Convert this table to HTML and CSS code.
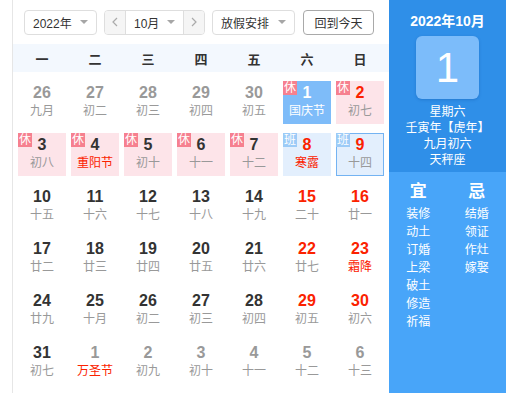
FILE: index.html
```html
<!DOCTYPE html>
<html lang="zh">
<head>
<meta charset="utf-8">
<title>万年历</title>
<link rel="stylesheet" href="styles.css">
</head>
<body>
<div class="cal">
  <div class="main">
    <div class="toolbar">
      <div class="select year"><span>2022年</span><i class="caret"></i></div>
      <div class="month-group">
        <div class="nav"><svg width="6" height="10" viewBox="0 0 6 10"><polyline points="5,1 1,5 5,9" fill="none" stroke="#aaa" stroke-width="1.2"/></svg></div>
        <div class="month"><span>10月</span><i class="caret"></i></div>
        <div class="nav"><svg width="6" height="10" viewBox="0 0 6 10"><polyline points="1,1 5,5 1,9" fill="none" stroke="#aaa" stroke-width="1.2"/></svg></div>
      </div>
      <div class="select holiday"><span>放假安排</span><i class="caret"></i></div>
      <button class="today-btn">回到今天</button>
    </div>
    <div class="week">
      <span>一</span><span>二</span><span>三</span><span>四</span><span>五</span><span>六</span><span>日</span>
    </div>
    <div class="grid">
      <div class="cell other"><b>26</b><em>九月</em></div>
      <div class="cell other"><b>27</b><em>初二</em></div>
      <div class="cell other"><b>28</b><em>初三</em></div>
      <div class="cell other"><b>29</b><em>初四</em></div>
      <div class="cell other"><b>30</b><em>初五</em></div>
      <div class="cell rest selected"><i class="tag">休</i><b>1</b><em>国庆节</em></div>
      <div class="cell rest wkend"><i class="tag">休</i><b>2</b><em>初七</em></div>

      <div class="cell rest"><i class="tag">休</i><b>3</b><em>初八</em></div>
      <div class="cell rest"><i class="tag">休</i><b>4</b><em class="fest">重阳节</em></div>
      <div class="cell rest"><i class="tag">休</i><b>5</b><em>初十</em></div>
      <div class="cell rest"><i class="tag">休</i><b>6</b><em>十一</em></div>
      <div class="cell rest"><i class="tag">休</i><b>7</b><em>十二</em></div>
      <div class="cell work wkend"><i class="tag">班</i><b>8</b><em class="fest">寒露</em></div>
      <div class="cell work wkend today"><i class="tag">班</i><b>9</b><em>十四</em></div>

      <div class="cell"><b>10</b><em>十五</em></div>
      <div class="cell"><b>11</b><em>十六</em></div>
      <div class="cell"><b>12</b><em>十七</em></div>
      <div class="cell"><b>13</b><em>十八</em></div>
      <div class="cell"><b>14</b><em>十九</em></div>
      <div class="cell wkend"><b>15</b><em>二十</em></div>
      <div class="cell wkend"><b>16</b><em>廿一</em></div>

      <div class="cell"><b>17</b><em>廿二</em></div>
      <div class="cell"><b>18</b><em>廿三</em></div>
      <div class="cell"><b>19</b><em>廿四</em></div>
      <div class="cell"><b>20</b><em>廿五</em></div>
      <div class="cell"><b>21</b><em>廿六</em></div>
      <div class="cell wkend"><b>22</b><em>廿七</em></div>
      <div class="cell wkend"><b>23</b><em class="fest">霜降</em></div>

      <div class="cell"><b>24</b><em>廿九</em></div>
      <div class="cell"><b>25</b><em>十月</em></div>
      <div class="cell"><b>26</b><em>初二</em></div>
      <div class="cell"><b>27</b><em>初三</em></div>
      <div class="cell"><b>28</b><em>初四</em></div>
      <div class="cell wkend"><b>29</b><em>初五</em></div>
      <div class="cell wkend"><b>30</b><em>初六</em></div>

      <div class="cell"><b>31</b><em>初七</em></div>
      <div class="cell other"><b>1</b><em class="fest">万圣节</em></div>
      <div class="cell other"><b>2</b><em>初九</em></div>
      <div class="cell other"><b>3</b><em>初十</em></div>
      <div class="cell other"><b>4</b><em>十一</em></div>
      <div class="cell other"><b>5</b><em>十二</em></div>
      <div class="cell other"><b>6</b><em>十三</em></div>
    </div>
  </div>
  <div class="side">
    <div class="side-top">
      <div class="side-title">2022年10月</div>
      <div class="big-day">1</div>
      <div class="side-info">
        <div>星期六</div>
        <div>壬寅年【虎年】</div>
        <div>九月初六</div>
        <div>天秤座</div>
      </div>
    </div>
    <div class="side-bot">
      <div class="yj">
        <div class="yj-head">宜</div>
        <div>装修</div><div>动土</div><div>订婚</div><div>上梁</div><div>破土</div><div>修造</div><div>祈福</div>
      </div>
      <div class="yj">
        <div class="yj-head">忌</div>
        <div>结婚</div><div>领证</div><div>作灶</div><div>嫁娶</div>
      </div>
    </div>
  </div>
</div>
</body>
</html>
```
FILE: styles.css
```css
* { box-sizing: border-box; }
body {
  margin: 0;
  background: #fff;
  font-family: "Liberation Sans", "Noto Sans CJK SC", sans-serif;
  color: #333;
}
.cal {
  display: flex;
  margin-left: 12px;
  width: 494px;
  height: 393px;
}
.main {
  width: 377px;
  border-left: 1px solid #e6e6e6;
}
.toolbar {
  display: flex;
  align-items: center;
  height: 44px;
  padding: 10px 0 10px 11px;
}
.select {
  display: flex;
  align-items: center;
  justify-content: space-between;
  height: 25px;
  border: 1px solid #dedede;
  border-radius: 4px;
  font-size: 12px;
  padding: 0 8px 0 8px;
  margin-right: 7px;
}
.year { width: 73px; }
.holiday { width: 83px; margin-left: 0; }
.caret {
  width: 0;
  height: 0;
  border-left: 4px solid transparent;
  border-right: 4px solid transparent;
  border-top: 4px solid #a6a6a6;
}
.month-group {
  display: flex;
  height: 25px;
  width: 101px;
  border: 1px solid #dedede;
  border-radius: 4px;
  overflow: hidden;
  margin-right: 7px;
  font-size: 12px;
}
.nav {
  width: 20px;
  background: #f5f5f5;
  display: flex;
  align-items: center;
  justify-content: center;
}
.month {
  flex: 1;
  display: flex;
  align-items: center;
  justify-content: space-between;
  padding: 0 8px 0 8px;
  border-left: 1px solid #dedede;
  border-right: 1px solid #dedede;
}
.today-btn {
  width: 71px;
  height: 25px;
  border: 1px solid #a9a9a9;
  border-radius: 4px;
  background: #fff;
  font-family: inherit;
  font-size: 12px;
  color: #333;
  padding: 0;
  margin-left: 1px;
}
.week {
  display: grid;
  grid-template-columns: repeat(7, 48px);
  column-gap: 5px;
  height: 28px;
  align-items: center;
  padding-left: 5px;
  background: #f3f8fe;
  font-size: 13px;
  font-weight: bold;
  color: #333;
  text-align: center;
}
.grid {
  display: grid;
  grid-template-columns: repeat(7, 48px);
  grid-auto-rows: 43px;
  column-gap: 5px;
  row-gap: 9px;
  padding: 9px 0 0 5px;
}
.cell {
  position: relative;
  text-align: center;
  padding-top: 2px;
}
.cell b {
  display: block;
  font-size: 16px;
  line-height: 20px;
  font-weight: bold;
  color: #333;
}
.cell em {
  display: block;
  font-style: normal;
  font-size: 12px;
  line-height: 16px;
  color: #999;
}
.cell.other b { color: #999; }
.cell.wkend b { color: #fb2200; }
.cell em.fest { color: #fb2200; }
.tag {
  position: absolute;
  left: 0;
  top: 0;
  width: 14px;
  height: 14px;
  font-style: normal;
  font-size: 12px;
  line-height: 14px;
  color: #fff;
  text-align: center;
}
.rest { background: #fde4e9; }
.rest .tag { background: #f6808f; }
.work { background: #e3effd; }
.work .tag { background: #9ccbf7; }
.today { border: 1px solid #74b3f2; padding-top: 1px; }
.today .tag { left: -1px; top: -1px; }
.selected { background: #7ebcf9; }
.selected b, .selected em { color: #fff; }

.side {
  width: 117px;
  display: flex;
  flex-direction: column;
  color: #fff;
}
.side-top {
  background: #2f8fe8;
  height: 172px;
  padding-top: 12px;
  text-align: center;
}
.side-title {
  font-size: 14px;
  font-weight: bold;
  line-height: 18px;
}
.big-day {
  width: 63px;
  height: 63px;
  margin: 6px auto 5px;
  background: #7cbcfa;
  border-radius: 6px;
  box-shadow: 0 1px 3px rgba(0, 60, 140, 0.25);
  font-size: 42px;
  line-height: 63px;
}
.side-info {
  font-size: 12px;
  line-height: 16px;
}
.side-bot {
  flex: 1;
  background: #48a5f9;
  display: flex;
  padding-top: 10px;
}
.yj {
  width: 50%;
  text-align: center;
  font-size: 12px;
  line-height: 18px;
}
.yj-head {
  font-size: 17px;
  font-weight: bold;
  line-height: 20px;
  margin-bottom: 3px;
}
```
